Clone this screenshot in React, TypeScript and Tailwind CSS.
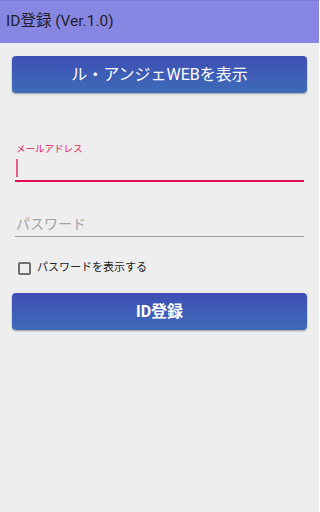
import React from "react";

const font = { fontFamily: '"Roboto", "Noto Sans CJK JP", sans-serif' };

export default function App() {
  return (
    <div
      className="w-[319px] h-[512px] bg-[#eeeeee] flex flex-col"
      style={font}
    >
      <div className="h-[43px] bg-[#8886e3] border-t border-[#7c7ad8] flex items-center px-[6px]">
        <span className="text-[15.5px] text-[#1f1f2a] leading-none">
          ID登録 (Ver.1.0)
        </span>
      </div>

      <div className="flex flex-col px-3">
        <button className="mt-[13px] h-[37px] w-full rounded-[4px] bg-gradient-to-b from-[#3f4eb4] to-[#3d6bb8] shadow-[0_1px_2px_rgba(0,0,0,0.35)] text-white text-[16px] font-normal">
          ル・アンジェWEBを表示
        </button>

        <div className="mx-[3px] mt-[50px] flex flex-col">
          <span className="text-[9.5px] leading-[12px] text-[#e0185a] pl-[1px]">
            メールアドレス
          </span>
          <div className="h-[27px] flex items-end pb-[3px] border-b-2 border-[#e0104c]">
            <span className="ml-[1px] w-[2px] h-[18px] bg-[#e55b86]" />
          </div>
        </div>

        <div className="mx-[3px] mt-[29px] h-[26px] flex items-end pb-[5px] border-b border-[#9a9a9a]">
          <span className="text-[14px] leading-none text-[#a3a3a3] pl-[1px]">
            パスワード
          </span>
        </div>

        <label className="mt-[24px] ml-[6px] flex items-center gap-[6px] h-[14px]">
          <span className="w-[13px] h-[13px] border-2 border-[#707070] rounded-[2px]" />
          <span className="text-[11px] text-[#222]">パスワードを表示する</span>
        </label>

        <button className="mt-[18px] h-[37px] w-full rounded-[4px] bg-gradient-to-b from-[#3f4eb4] to-[#3d6bb8] shadow-[0_1px_2px_rgba(0,0,0,0.35)] text-white text-[16px] font-bold">
          ID登録
        </button>
      </div>
    </div>
  );
}
